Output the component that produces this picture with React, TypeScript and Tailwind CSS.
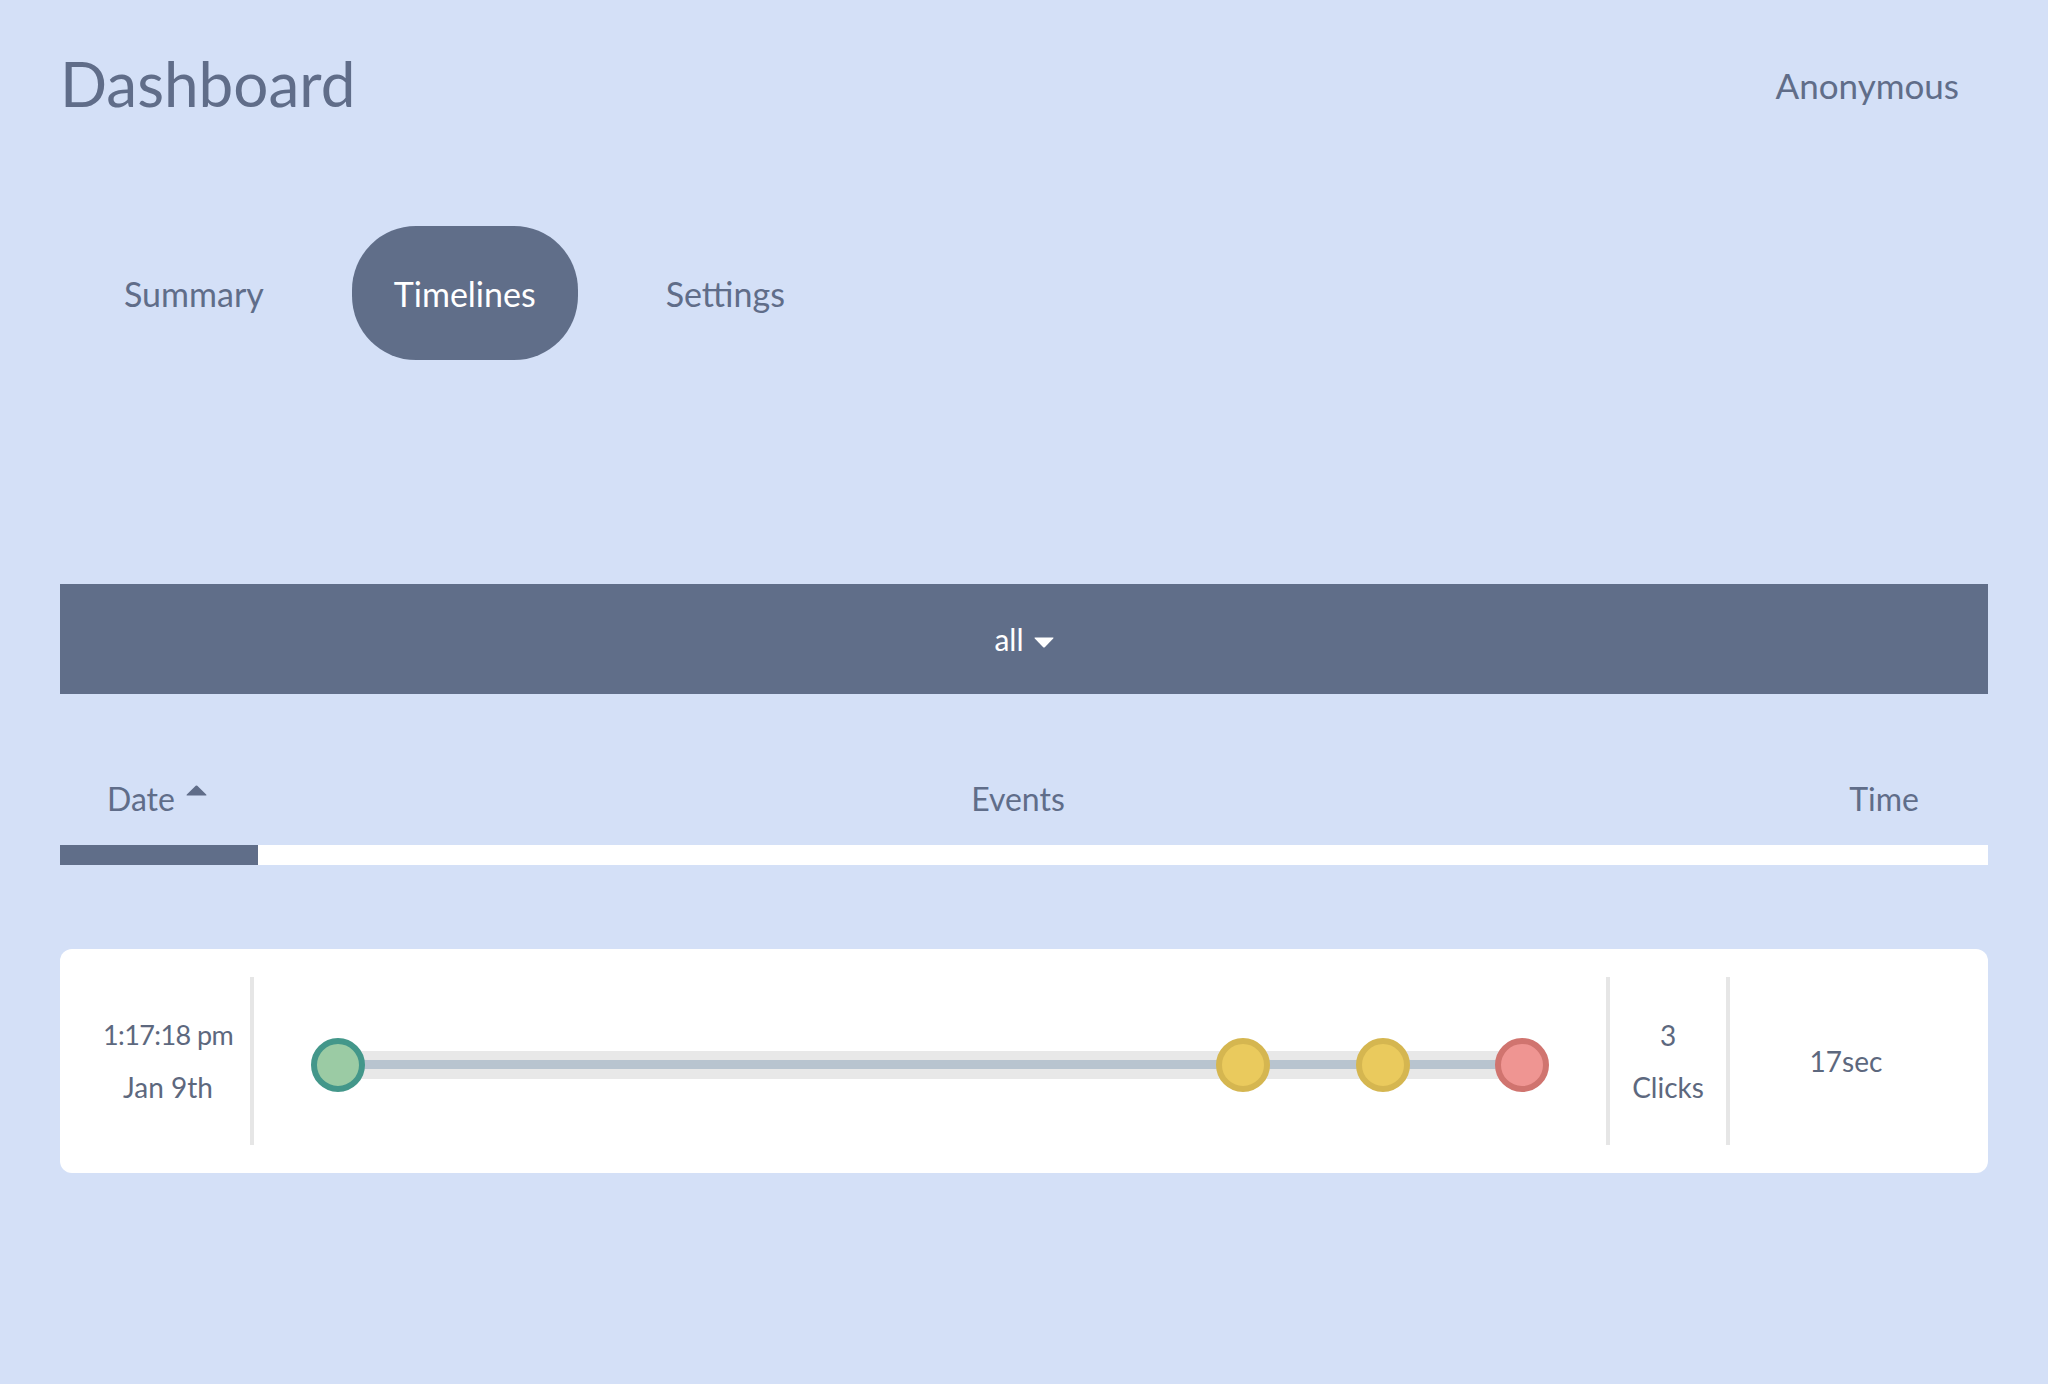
import React from 'react'

const events = [
    { at: 0, fill: 'bg-[#9bcba4]', ring: 'border-[#43978a]' },
    { at: 13, fill: 'bg-[#eaca5d]', ring: 'border-[#d5b650]' },
    { at: 15, fill: 'bg-[#eaca5d]', ring: 'border-[#d5b650]' },
    { at: 17, fill: 'bg-[#ef9592]', ring: 'border-[#d0746f]' },
]

const tabs = ['Summary', 'Timelines', 'Settings']

function CaretDown({ className }: { className?: string }) {
    return (
        <svg viewBox="0 0 20 11" className={className} fill="currentColor">
            <path d="M1 0.5 H19 Q20 0.5 19.2 1.4 L10.8 10.2 Q10 11 9.2 10.2 L0.8 1.4 Q0 0.5 1 0.5 Z" />
        </svg>
    )
}

function CaretUp({ className }: { className?: string }) {
    return (
        <svg viewBox="0 0 21 11" className={className} fill="currentColor">
            <path d="M1 10.5 H20 Q21 10.5 20.2 9.6 L11.3 0.8 Q10.5 0 9.7 0.8 L0.8 9.6 Q0 10.5 1 10.5 Z" />
        </svg>
    )
}

function Timeline() {
    const total = 17
    return (
        <div className="relative h-[54px] w-full">
            {/* track */}
            <div className="absolute left-[27px] right-[27px] top-[13px] h-[28px] bg-[#e8e8e8]" />
            <div className="absolute left-[27px] right-[27px] top-[22px] h-[9px] bg-[#b8c4cf]" />
            {events.map((e, i) => (
                <div
                    key={i}
                    className={`absolute top-0 h-[54px] w-[54px] rounded-full border-[6px] ${e.fill} ${e.ring}`}
                    style={{ left: `calc(${e.at / total} * (100% - 54px))` }}
                />
            ))}
        </div>
    )
}

export default function App() {
    return (
        <div className="min-h-screen bg-[#d4e0f7] px-[60px] pb-[120px] font-['Lato',sans-serif] text-[#606d89]">
            {/* Header */}
            <header className="flex items-center justify-between pt-[46px]">
                <h1 className="text-[62px] leading-[1.2] font-normal">Dashboard</h1>
                <span className="mr-[29px] mt-[4px] text-[35px] leading-[1.2]">Anonymous</span>
            </header>

            {/* Tabs */}
            <nav className="mt-[106px] flex gap-[46px] pl-[22px]">
                {tabs.map((t) => {
                    const active = t === 'Timelines'
                    return (
                        <button
                            key={t}
                            className={`flex h-[134px] items-center rounded-[64px] px-[42px] pt-[2px] text-[34px] leading-[1.2] ${
                                active ? 'bg-[#606e89] text-white' : 'text-[#606d89]'
                            }`}
                        >
                            {t}
                        </button>
                    )
                })}
            </nav>

            {/* Filter */}
            <div className="mt-[224px] flex h-[110px] items-center justify-center gap-[10px] bg-[#606e89] text-white">
                <span className="text-[30px] leading-[1.2]">all</span>
                <CaretDown className="mt-[6px] h-[11px] w-[20px]" />
            </div>

            {/* Table head */}
            <div className="mt-[86px] flex pb-[26px] text-[32px] leading-[1.2]">
                <div className="flex w-[198px] items-start gap-[11px] pl-[47px]">
                    <span>Date</span>
                    <CaretUp className="mt-[5px] h-[11px] w-[21px]" />
                </div>
                <div className="flex-1 text-center">Events</div>
                <div className="w-[210px] pr-[69px] text-right">Time</div>
            </div>
            <div className="flex h-[20px]">
                <div className="w-[198px] bg-[#606e89]" />
                <div className="flex-1 bg-white" />
            </div>

            {/* Row */}
            <div className="mt-[84px] flex h-[224px] rounded-[12px] bg-white py-[28px] text-[28px] leading-[52px] text-[#5d687e]">
                <div className="flex w-[190px] flex-col items-center justify-center pl-[26px]">
                    <span className="text-[27px] tracking-[-0.6px]">1:17:18 pm</span>
                    <span>Jan 9th</span>
                </div>
                <div className="w-[4px] bg-[#e6e6e6]" />
                <div className="flex flex-1 items-center px-[57px] pt-[8px]">
                    <Timeline />
                </div>
                <div className="w-[4px] bg-[#e6e6e6]" />
                <div className="flex w-[116px] flex-col items-center justify-center">
                    <span>3</span>
                    <span>Clicks</span>
                </div>
                <div className="w-[4px] bg-[#e6e6e6]" />
                <div className="flex max-w-[258px] flex-1 items-center justify-center pr-[26px]">
                    <span>17sec</span>
                </div>
            </div>
        </div>
    )
}
